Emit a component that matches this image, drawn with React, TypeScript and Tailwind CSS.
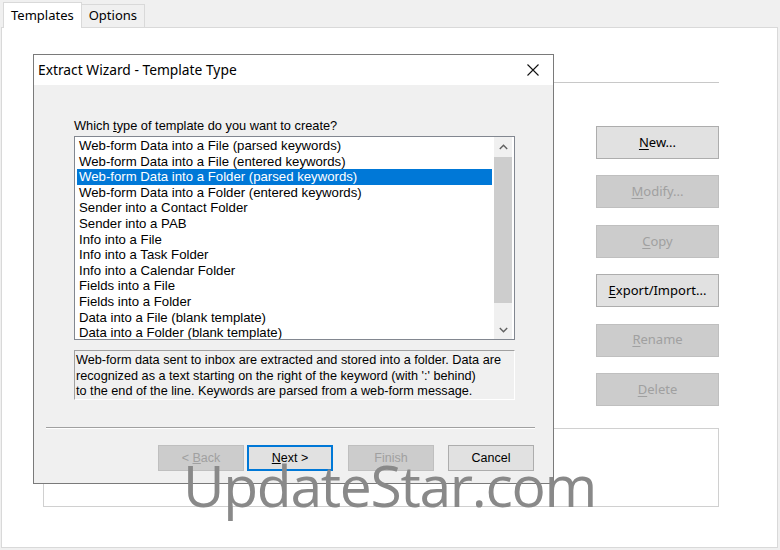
import React from "react";

const items = [
  "Web-form Data into a File (parsed keywords)",
  "Web-form Data into a File (entered keywords)",
  "Web-form Data into a Folder (parsed keywords)",
  "Web-form Data into a Folder (entered keywords)",
  "Sender into a Contact Folder",
  "Sender into a PAB",
  "Info into a File",
  "Info into a Task Folder",
  "Info into a Calendar Folder",
  "Fields into a File",
  "Fields into a Folder",
  "Data into a File (blank template)",
  "Data into a Folder (blank template)",
];

const UI = "font-['Noto_Sans','Liberation_Sans',sans-serif]";
const SYS = "font-['Liberation_Sans',Arial,sans-serif]";

function SideButton({ u, rest, enabled }: { u: string; rest: string; enabled?: boolean }) {
  return (
    <div
      className={
        "h-[33px] w-[123px] flex items-center justify-center text-[13px] border " +
        (enabled
          ? "bg-[#e1e1e1] border-[#adadad] text-[#000]"
          : "bg-[#cccccc] border-[#bfbfbf] text-[#a0a0a0]")
      }
    >
      <span>
        <span className="underline underline-offset-2">{u}</span>
        {rest}
      </span>
    </div>
  );
}

function WizButton({ u, pre, rest, kind }: { u: string; pre?: string; rest: string; kind: "disabled" | "focus" | "normal" }) {
  const cls =
    kind === "disabled"
      ? "bg-[#cccccc] border border-[#bfbfbf] text-[#a0a0a0]"
      : kind === "focus"
      ? "bg-[#e1e1e1] border-2 border-[#0078d7] text-black"
      : "bg-[#e1e1e1] border border-[#adadad] text-black";
  return (
    <div className={"h-[26px] w-[86px] flex items-center justify-center text-[12.5px] " + cls}>
      <span>
        {pre}
        <span className="underline underline-offset-1">{u}</span>
        {rest}
      </span>
    </div>
  );
}

export default function App() {
  return (
    <div className={"relative w-[780px] h-[550px] bg-[#f0f0f0] overflow-hidden " + UI}>
      {/* Tab strip */}
      <div className="flex items-end h-[27px] pl-[3px]">
        <div className="relative z-10 h-[26px] px-[7px] bg-white border border-b-0 border-[#d9d9d9] flex items-center text-[13px] text-black -mb-[1px]">
          Templates
        </div>
        <div className="h-[23px] px-[7px] bg-[#f0f0f0] border border-l-0 border-b-0 border-[#d9d9d9] flex items-center text-[13px] text-black">
          Options
        </div>
      </div>
      {/* Tab page */}
      <div className="ml-[1px] w-[777px] h-[521px] bg-white border border-[#d9d9d9] pl-[41px]">
        <div className="w-[676px] flex flex-col">
          <div className="mt-[54px] h-[1px] bg-[#c8c8c8]" />
          <div className="flex justify-end">
            <div className="mt-[43px] flex flex-col gap-[16.4px]">
              <SideButton u="N" rest="ew..." enabled />
              <SideButton u="M" rest="odify..." />
              <SideButton u="C" rest="opy" />
              <SideButton u="E" rest="xport/Import..." enabled />
              <SideButton u="R" rest="ename" />
              <SideButton u="D" rest="elete" />
            </div>
          </div>
          <div className="mt-[22px] h-[79px] border border-[#d0d0d0]" />
        </div>
      </div>

      {/* Dialog */}
      <div className="absolute left-[33px] top-[54px] w-[521px] h-[430px] border border-[#7a7a7a] bg-[#f0f0f0] flex flex-col">
        <div className="h-[30px] bg-white flex items-center justify-between pl-[4px] pr-[14px]">
          <span className="text-[13.8px] text-black">Extract Wizard - Template Type</span>
          <svg width="12" height="12" viewBox="0 0 12 12" className="block">
            <path d="M0.5 0.5 L11.5 11.5 M11.5 0.5 L0.5 11.5" stroke="#111" strokeWidth="1.1" fill="none" />
          </svg>
        </div>
        <div className={"flex flex-col " + SYS}>
          <div className="mt-[34px] ml-[40px] h-[14px] leading-[14px] text-[12.8px] text-black whitespace-nowrap">
            Which <span className="underline">t</span>ype of template do you want to create?
          </div>
          <div className="mt-[3px] ml-[40px] w-[441px] h-[204px] border border-[#828790] bg-white flex overflow-hidden">
            <div className="flex-1 pt-[1px] px-[2px] overflow-hidden">
              {items.map((t, i) => (
                <div
                  key={t}
                  className={
                    "h-[15.6px] leading-[15.6px] pl-[2px] text-[13.2px] whitespace-nowrap " +
                    (i === 2 ? "bg-[#0078d7] text-white" : "text-black")
                  }
                >
                  {t}
                </div>
              ))}
            </div>
            <div className="w-[18px] mr-[2px] bg-[#f0f0f0] flex flex-col">
              <div className="h-[20px] flex items-center justify-center">
                <svg width="9" height="6" viewBox="0 0 9 6">
                  <path d="M0.8 5 L4.5 1.3 L8.2 5" stroke="#606060" strokeWidth="1.4" fill="none" />
                </svg>
              </div>
              <div className="h-[146px] bg-[#cdcdcd]" />
              <div className="flex-1" />
              <div className="h-[18px] flex items-center justify-center">
                <svg width="9" height="6" viewBox="0 0 9 6">
                  <path d="M0.8 1 L4.5 4.7 L8.2 1" stroke="#606060" strokeWidth="1.4" fill="none" />
                </svg>
              </div>
            </div>
          </div>
          <div className="mt-[10px] ml-[40px] w-[441px] h-[50px] border-t border-l border-[#a0a0a0] border-b border-r border-b-white border-r-white pt-[2px] pl-[1px] text-[12.7px] leading-[15.5px] text-black">
            <div className="whitespace-nowrap">Web-form data sent to inbox are extracted and stored into a folder. Data are</div>
            <div className="whitespace-nowrap">recognized as a text starting on the right of the keyword (with ':' behind)</div>
            <div className="whitespace-nowrap">to the end of the line. Keywords are parsed from a web-form message.</div>
          </div>
          <div className="mt-[27px] ml-[12px] mr-[18px] h-[2px] border-t border-[#a0a0a0] border-b border-b-white" />
          <div className="mt-[16px] mr-[19px] flex justify-end">
            <WizButton pre="< " u="B" rest="ack" kind="disabled" />
            <div className="w-[3px]" />
            <WizButton u="N" rest="ext >" kind="focus" />
            <div className="w-[15px]" />
            <WizButton u="" rest="Finish" kind="disabled" />
            <div className="w-[14px]" />
            <WizButton u="" rest="Cancel" kind="normal" />
          </div>
        </div>
      </div>

      {/* Watermark */}
      <div className="absolute left-[183px] top-[457px] text-[57px] leading-[57px] tracking-[-1.3px] text-[#898989] font-['Open_Sans',sans-serif] whitespace-nowrap pointer-events-none">
        UpdateStar.com
      </div>
    </div>
  );
}
